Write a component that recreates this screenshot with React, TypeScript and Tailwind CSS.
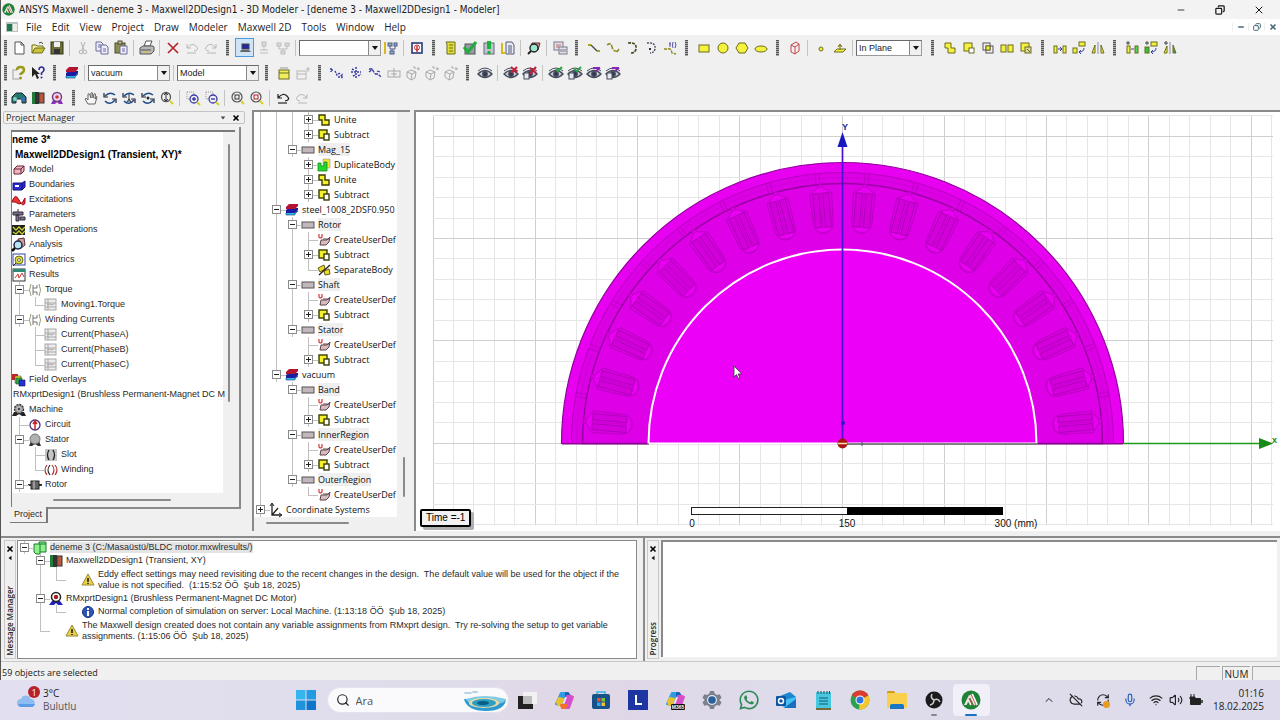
import React, { useState } from 'react';
import { Minus, Copy, X, Search, ChevronUp, CloudOff, RefreshCw, Mic, Wifi, Volume2 } from 'lucide-react';
import { FaWhatsapp } from 'react-icons/fa';

const Y = '#f4f23c';
const OL = '#6b6b1e';
const BL = '#3a3aa8';

const cube = <path d="M3 7l3-3h7v5l-3 3H3z M3 7h7v5 M10 7l3-3" />;

const eye = (
  <g fill="none" stroke="#454a5c" strokeWidth="1.4">
    <path d="M1 6Q8 0 15 6" strokeWidth="1" />
    <path d="M1 9Q8 2 15 9Q8 16 1 9z" fill="#c9cdd8" />
    <circle cx="8" cy="9" r="2.2" fill="#30364a" />
  </g>
);

const eyeBox = (
  <g>
    {eye}
    <rect x="2" y="8" width="5" height="6" fill="#e8e8f0" stroke="#454a5c" />
  </g>
);

const orbit = (
  <g fill="none" stroke="#1f4e8c" strokeWidth="1.6">
    <path d="M3 6Q8 1 13 5" />
    <path d="M3 11Q8 16 13 10" />
    <path d="M2 3v4h4M14 13V9h-4" strokeWidth="1.2" stroke="#223" />
  </g>
);

const icons: Record<string, React.ReactNode> = {
  new: <path d="M4 2h6l3 3v9H4z M10 2v3h3" fill="#fff" stroke="#555" />,
  open: <g stroke="#6b6b1e"><path d="M2 13V5h4l1 1h6v3" fill="#f7f3a0" /><path d="M2 13l3-5h10l-3 5z" fill="#c9c43a" /><path d="M9 3q3-2 4 1" fill="none" stroke="#444" /></g>,
  save: <g><rect x="2" y="2" width="12" height="12" fill="#6d6d35" stroke="#33331a" /><rect x="5" y="2" width="6" height="5" fill="#eee" /><rect x="5" y="9" width="6" height="5" fill="#333" /></g>,
  cut: <g stroke="#b4b4b4" fill="none"><path d="M6 2l3 8M10 2L7 10" /><circle cx="6" cy="12" r="1.8" /><circle cx="10" cy="12" r="1.8" /></g>,
  copy: <g fill="#eef" stroke="#6a6a98"><path d="M2 2h5l2 2v7H2z" /><path d="M7 5h5l2 2v7H7z" /><path d="M4 5h3M4 7h3M9 9h3M9 11h3" /></g>,
  paste: <g stroke="#4d4d2a"><rect x="2" y="3" width="10" height="10" fill="#8d8d55" /><rect x="5" y="1" width="4" height="3" fill="#bbb" /><path d="M7 6h7v8H7z" fill="#eef" stroke="#6a6a98" /><path d="M9 9h3M9 11h3" stroke="#6a6a98" /></g>,
  print: <g stroke="#555"><path d="M5 6l2-5h6l-2 5z" fill="#fff" /><path d="M1 8l3-2h10l1 1v4l-3 3H1z" fill="#b8b8b8" /><path d="M2 10h10" /><path d="M4 12h6" stroke="#d8c94a" /></g>,
  delete: <path d="M3 3l10 10M13 3L3 13" stroke="#b8232f" strokeWidth="1.7" />,
  undoOff: <g stroke="#b8b8b8" fill="none"><path d="M3 4v4h4M3 8q5-6 9-2t-2 5" /><path d="M3 13h9" /></g>,
  redoOff: <g stroke="#b8b8b8" fill="none"><path d="M13 4v4H9M13 8Q8 2 4 6t2 5" /><path d="M4 13h9" /></g>,
  undo: <g stroke="#222" fill="none" strokeWidth="1.2"><path d="M3 4v4h4M3 8q5-6 9-2t-2 5" /><path d="M3 13h9" /></g>,
  pc: <g><rect x="5" y="4" width="7" height="5" fill="#2525a8" stroke="#444" /><path d="M4 10h8l2 2H3z" fill="#666" /></g>,
  nodeOff: <g stroke="#bbb" fill="#ddd"><rect x="6" y="2" width="4" height="4" /><path d="M8 6v4M4 10h8M4 13h8" /></g>,
  treeOff: <g stroke="#bbb" fill="#ddd"><rect x="2" y="3" width="4" height="3" /><rect x="10" y="3" width="4" height="3" /><path d="M4 6v3h8V6M8 9v3" fill="none" /><rect x="6" y="11" width="4" height="3" /></g>,
  tree: <g stroke="#4a5a8a" fill="#9ab"><path d="M2 2v12" stroke="#d6b821" strokeWidth="2" /><rect x="5" y="3" width="4" height="3" /><rect x="11" y="3" width="3" height="3" /><path d="M7 6v3h5V6M9 9v3" fill="none" /><rect x="7" y="11" width="4" height="3" /></g>,
  chip: <g><rect x="3" y="3" width="10" height="10" fill="#fff" stroke="#27387a" strokeWidth="1.600" /><circle cx="8" cy="7.500" r="2.500" fill="none" stroke="#c22" /><path d="M8 12V6" stroke="#c22" strokeWidth="1.400" /></g>,
  note: <g stroke={OL}><path d="M3 2h9v12H4V4z" fill="#e4de3a" /><path d="M6 5h4M6 8h4M6 11h4" /></g>,
  check: <g><rect x="3" y="4" width="10" height="10" fill="#99a" stroke="#555" /><path d="M2 7l4 5 8-10" stroke="#1fae3c" strokeWidth="3" fill="none" /></g>,
  solve: <g><rect x="3" y="3" width="10" height="11" fill="#c4c4d0" stroke="#667" /><path d="M8 1v8" stroke="#17b53a" strokeWidth="4" /><circle cx="8" cy="12.500" r="1.700" fill="#17b53a" /></g>,
  report: <g><path d="M2 3v10h3" stroke="#d6b821" strokeWidth="2" fill="none" /><path d="M6 2h6l2 3v9H6z" fill="#e8eaf4" stroke="#555a78" /><path d="M8 6h4M8 8h4M8 10h4M8 12h4" stroke="#555a78" /></g>,
  lens: <g><path d="M6 3h8l-2 7H5z" fill="#d88" stroke="#633" /><circle cx="8" cy="8" r="4" fill="#9ee6d4" stroke="#222" strokeWidth="1.4" /><path d="M5 11l-3 3" stroke="#222" strokeWidth="2" /></g>,
  plots: <g stroke="#778" fill="#e2e2ec"><rect x="2" y="2" width="9" height="8" /><path d="M4 5h5M4 7h3" stroke="#c66" /><rect x="7" y="7" width="8" height="7" /><path d="M9 9v3M11 9v3M13 9v3" /></g>,
  line: <g fill="none" strokeWidth="1.400"><path d="M2 5h3M11 11h3" stroke="#a8a420" strokeWidth="2" /><path d="M5 5l6 6" stroke="#444" strokeWidth="1.200" /></g>,
  spline: <path d="M2 5q4-3 5 2t6 4M12 12l2-3" stroke="#8d8a20" fill="none" strokeWidth="1.500" strokeDasharray="4 1" />,
  arc: <path d="M4 3q9-1 8 6q-1 4-5 4" stroke="#444a20" fill="none" strokeWidth="1.600" strokeDasharray="3 1" />,
  arc2: <g><path d="M4 3q9-1 8 6q-1 4-5 4" stroke="#444a60" fill="none" strokeWidth="1.400" strokeDasharray="2 1" /><rect x="6" y="8" width="2" height="2" fill="#333" /></g>,
  eqn: <g fill="none"><path d="M2 9h4q3-1 4 4l4 1" stroke="#8d8a20" strokeWidth="1.400" strokeDasharray="3 1" /><path d="M8 2v5M7 4h2M11 2q-1 3 0 6M13 2q2 3 0 6" stroke="#55a" /></g>,
  rect: <rect x="3" y="5" width="10" height="7" fill={Y} stroke={OL} />,
  circle: <circle cx="8" cy="8" r="5" fill={Y} stroke={OL} />,
  poly: <path d="M5 3h6l3 5-3 5H5L2 8z" fill={Y} stroke={OL} />,
  ellipse: <ellipse cx="8" cy="9" rx="6" ry="3" fill={Y} stroke={OL} />,
  box3: <path d="M4 5l5-3 3 2v7l-4 3-4-2z M4 5l4 2v7 M8 7l4-3" fill="none" stroke="#c4444c" />,
  point: <circle cx="8" cy="9" r="2" fill={Y} stroke={OL} />,
  plane: <path d="M2 12l3-3h9l-3 3z M8 10V5M6 7l2-3 2 3" fill={Y} stroke={OL} />,
  unite: <path d="M3 3h6v5h4v5H6V8H3z" fill={Y} stroke={OL} />,
  subtract: <g stroke={OL}><rect x="3" y="3" width="8" height="8" fill={Y} /><rect x="8" y="8" width="5" height="5" fill="#fff" /></g>,
  intersect: <g stroke="#555" fill="none"><rect x="3" y="3" width="7" height="7" /><rect x="6" y="6" width="7" height="7" /><rect x="6" y="6" width="4" height="4" fill={Y} stroke={OL} /></g>,
  split: <g fill={Y} stroke={OL}><rect x="2" y="5" width="5" height="7" /><rect x="9" y="5" width="5" height="7" /></g>,
  imprint: <g stroke={OL} fill={Y}><rect x="3" y="3" width="8" height="8" /><rect x="7" y="7" width="6" height="6" fill="#d8d8a0" /><path d="M9 9l3 3" /></g>,
  move: <g fill={Y} stroke={OL}><rect x="2" y="6" width="3" height="7" /><rect x="11" y="6" width="3" height="7" /><path d="M6 9h4M8 7l2 2-2 2" stroke={BL} fill="none" /></g>,
  rotate: <g fill={Y} stroke={OL}><rect x="2" y="8" width="4" height="5" /><rect x="8" y="2" width="6" height="4" /><path d="M13 8q0 4-5 4M10 10l-2 2 2 2" stroke={BL} fill="none" /></g>,
  mirror: <g fill={Y} stroke={OL}><path d="M2 13l3-8v8z" /><path d="M14 13l-3-8v8z" /><path d="M8 2v12" stroke="#88a" /></g>,
  dupLine: <g fill={Y} stroke={OL}><rect x="3" y="6" width="3" height="7" /><rect x="11" y="6" width="3" height="7" fill="#4fd65a" /><path d="M7 9h3" stroke={BL} /><path d="M4 1v4M2 3h4" stroke="#444" /></g>,
  dupAxis: <g fill={Y} stroke={OL}><rect x="2" y="7" width="4" height="6" fill="#2fc63a" /><rect x="8" y="2" width="6" height="4" /><path d="M13 8q0 4-5 4M10 10l-2 2 2 2" stroke={BL} fill="none" /><path d="M4 1v4M2 3h4" stroke="#444" /></g>,
  dupMirror: <g fill={Y} stroke={OL}><path d="M2 13l3-7v7z" /><path d="M14 13l-3-8v8z" fill="#4fa65a" /><path d="M8 2v12" stroke="#88a" /><path d="M4 1v4M2 3h4" stroke="#444" /></g>,
  help: <g><path d="M6 5H2v9h6" stroke="#bbb" fill="none" strokeWidth="1.500" /><path d="M6 5q0-3 3.500-3T13 5q0 2-3.500 4v1" stroke="#9a9a1c" fill="none" strokeWidth="2.500" /><circle cx="9.500" cy="13" r="1.500" fill="#9a9a1c" /></g>,
  whatis: <g><path d="M2 2v10l3-3 2 5 2-1-2-4h3z" fill="#222" /><path d="M9 5q0-3 2.500-3T14 5q0 1-2.500 3v2" stroke="#2b2b9a" fill="none" strokeWidth="1.600" /><circle cx="11.500" cy="12.500" r="1" fill="#2b2b9a" /></g>,
  layers: <g><path d="M2 11l3-2h9l-3 3v1H2z" fill="#36b6e8" stroke="#147" strokeWidth=".6" /><path d="M2 8l3-2h9v2l-3 3H2z" fill="#1c1ca0" /><path d="M2 5l3-3h9v2l-3 3H2z" fill="#b31432" /></g>,
  sheet: <g><rect x="3" y="5" width="10" height="9" fill="#f0ee60" stroke="#6b6b1e" /><path d="M3 8h10" stroke="#6b6b1e" /><path d="M4 3h8" stroke="#999" /></g>,
  sheetOff: <g stroke="#b8b8b8" fill="none"><rect x="2" y="6" width="9" height="8" /><path d="M2 9h9M13 2v5M11 4h4" /></g>,
  pts1: <g fill="none" stroke={BL}><path d="M2 3v4M2 5h3M6 6l2 4 3-2M9 12h2l2-2v4" strokeDasharray="2 1" strokeWidth="1.500" /></g>,
  pts2: <path d="M8 2v11M3 7h10M4 4l2 1M10 11l3-2M5 11l2-1" fill="none" stroke={BL} strokeDasharray="2 1" strokeWidth="1.500" />,
  pts3: <path d="M2 4h3l3 5M2 7l4-3M8 9h3l3 3M10 6l3 1" fill="none" stroke={BL} strokeDasharray="3 1" strokeWidth="1.300" />,
  frameOff: <g fill="none" stroke="#aaa"><rect x="2" y="6" width="12" height="6" /><path d="M8 3v9M5 9h6" /></g>,
  gemOff: <g fill="none" stroke="#aaa"><path d="M2 7l4-2 5 2-1 6-4 2-4-3z M2 7l5 2 4-2M7 9l-1 6" /><path d="M9 3h2M13 2v3M15 4h-3M9 1v2" /></g>,
  eye,
  eyeX: <g>{eye}<path d="M8 2l6 5M14 2L8 8" stroke="#c01f38" strokeWidth="2" /></g>,
  eyeBoxX: <g>{eyeBox}<path d="M8 3l6 5M14 2L8 9" stroke="#c01f38" strokeWidth="2" /></g>,
  eyeG: <g>{eye}<path d="M8 4l2 2 4-4" stroke="#2da34a" fill="none" strokeWidth="2" /></g>,
  eyeBoxG: <g>{eyeBox}<path d="M7 4l3 2 4-4" stroke="#2da34a" fill="none" strokeWidth="2" /></g>,
  eyeP: <g>{eye}<path d="M7 3h7M10 6l4-3" stroke="#8428b8" fill="none" strokeWidth="2" /></g>,
  eyeBoxP: <g>{eyeBox}<path d="M7 3h7M10 6l4-3" stroke="#8428b8" fill="none" strokeWidth="2" /></g>,
  globe: <g><path d="M1 13V7l4-4h6l4 4v6h-4V9H5v4z" fill="#24786e" stroke="#223" /><circle cx="4" cy="9" r="2" fill="#7bd5c5" /><circle cx="12" cy="9" r="2" fill="#3a6bc0" /></g>,
  design: <g><rect x="2" y="2" width="3" height="12" fill="#247a3a" /><rect x="5" y="2" width="4" height="12" fill="#333" /><rect x="9" y="3" width="5" height="10" fill="#b8583a" stroke="#333" /></g>,
  motor: <g><path d="M4 10l-2 4h4l2-2 2 2h4l-2-4z" fill="#8e2dc0" /><circle cx="8" cy="7" r="4.500" fill="#e9d8ee" stroke="#7a3a88" strokeWidth="1.500" /><circle cx="8" cy="7" r="1.800" fill="#c33" /></g>,
  motor2: <g><path d="M4 10l-3 4h5l2-2 2 2h5l-3-4z" fill="#2222b8" /><circle cx="8" cy="6" r="4.500" fill="#fff" stroke="#222" strokeWidth="1.500" /><circle cx="8" cy="6" r="2.200" fill="#a81c1c" /></g>,
  hand: <path d="M5 14l-3-5q1-2 3 1V4q1-1 1.500 0L8 8l0-5q1-1 1.500 0l.5 5 1-4q1-1 1.500 0L12 9l1-2q1-1 1 0l-2 7z" fill="#f6f6f6" stroke="#555" strokeWidth=".9" />,
  orbit,
  orbitX: <g>{orbit}<path d="M8 4v8M6 12l2-3 2 3" stroke="#333" fill="none" /></g>,
  orbitDot: <g>{orbit}<circle cx="8" cy="8" r="1.500" fill="#222" /></g>,
  zoomDyn: <g fill="none"><circle cx="7" cy="7" r="4.500" stroke="#555" strokeWidth="1.300" /><path d="M7 4v6M5 5l2-2 2 2M5 9l2 2 2-2" stroke="#333" /><path d="M11 11l3 3" stroke="#d6d02a" strokeWidth="2" /></g>,
  zoomIn: <g fill="none"><path d="M2 2h7v3M2 2v7h3" stroke="#999" strokeDasharray="1 1" /><circle cx="9" cy="9" r="4" stroke={BL} strokeWidth="1.300" /><path d="M7 9h4M9 7v4" stroke={BL} strokeWidth="1.400" /><path d="M12 12l3 3" stroke="#d6d02a" strokeWidth="2" /></g>,
  zoomOut: <g fill="none"><path d="M2 2h7v3M2 2v7h3" stroke="#999" strokeDasharray="1 1" /><circle cx="9" cy="9" r="4" stroke={BL} strokeWidth="1.300" /><path d="M7 9h4" stroke={BL} strokeWidth="1.400" /><path d="M12 12l3 3" stroke="#d6d02a" strokeWidth="2" /></g>,
  fitAll: <g fill="none"><circle cx="7" cy="7" r="5" stroke="#555" strokeWidth="1.200" /><rect x="5" y="5" width="4" height="4" stroke="#333" /><path d="M11 11l3 3" stroke="#d6d02a" strokeWidth="2" /></g>,
  fitSel: <g fill="none"><circle cx="7" cy="7" r="5" stroke="#555" strokeWidth="1.200" /><rect x="5" y="5" width="4" height="4" stroke="#b23" /><path d="M11 11l3 3" stroke="#d6d02a" strokeWidth="2" /></g>,

  model: <g fill="#f0b4c0" stroke="#6b2433">{cube}</g>,
  boundaries: <g stroke="#15157a" fill="#2a2ad2"><path d="M2 6h9v7H2z M11 6l3-2v6l-3 3" /><path d="M4 9h4" stroke="#fff" strokeWidth="2" /></g>,
  excitations: <g><path d="M1 10Q4 0 8 8t6 3V6l-3 5-3 1-4-2z" fill="#e33" stroke="#9c1020" /></g>,
  parameters: <g stroke="#333" fill="#7a6a98"><path d="M2 5h10v3H2z M5 8h3v6H5z M9 10h5v3H9z M7 2v3" /></g>,
  mesh: <g><rect x="1" y="3" width="13" height="10" fill="#222" /><path d="M2 5l3 3 3-3 3 3 3-3M2 10l3 2 3-3 3 3 3-3" stroke="#c8d230" fill="none" strokeWidth="1.300" /></g>,
  analysis: <g><path d="M7 2l6-1 1 7-5 4z" fill="#d49aa4" stroke="#533" /><circle cx="7" cy="8" r="4" fill="#b8e4f2" stroke="#16264a" strokeWidth="1.500" /><path d="M4 11l-3 3" stroke="#111" strokeWidth="2.500" /></g>,
  optimetrics: <g><rect x="2" y="2" width="12" height="11" fill="#fff" stroke="#3344a8" /><circle cx="8" cy="8" r="4" fill="#e4e23a" stroke="#666a1a" /><circle cx="8" cy="8" r="1.500" fill="#fff" stroke="#666" /><path d="M2 14l3-3" stroke="#222" /></g>,
  results: <g><rect x="2" y="2" width="12" height="12" fill="#fff" stroke="#333" /><rect x="2" y="2" width="12" height="3" fill="#2d8a74" /><path d="M4 11l3-4 1 4 3-5 2 4" stroke="#c33" fill="none" /></g>,
  plot: <g fill="none" stroke="#9a9a7a"><path d="M4 2q-3 6 0 12M12 2q3 6 0 12" /><path d="M6 3v10M6 6h4v-3M6 10h4v3" stroke="#777" /></g>,
  trace: <g fill="#ececec" stroke="#a8a8a8"><rect x="2" y="2" width="11" height="11" /><path d="M2 6h11M2 10h11M4 8l2-1 2 1 3-1M5 2v11" /></g>,
  overlays: <g><path d="M1 2h6v6H1z" fill="#c8251d" /><path d="M4 4h6v7H4z" fill="#e8e12c" stroke="#444" strokeWidth=".6" /><path d="M5 6h6v6H5z" fill="#27b23c" stroke="#244" strokeWidth=".6" /><path d="M8 8h6v6H8z" fill="#2430d8" stroke="#114" strokeWidth=".6" /></g>,
  machine: <g><path d="M3 10l-2 4h4l3-2 3 2h4l-2-4z" fill="#222" /><circle cx="8" cy="7" r="4.500" fill="#999" stroke="#333" strokeWidth="1.300" strokeDasharray="2 1" /><circle cx="8" cy="7" r="2" fill="#444" stroke="#ddd" /></g>,
  circuit: <g fill="none"><circle cx="8" cy="8" r="5" stroke="#4b2f72" strokeWidth="1.300" /><path d="M8 12V5M6 7l2-3 2 3" stroke="#c22" strokeWidth="1.500" /></g>,
  stator: <g><path d="M4 9l-2 5h3l3-2 3 2h3l-2-5z" fill="#333" /><circle cx="8" cy="7" r="5" fill="#b0b0b0" stroke="#777" /></g>,
  slot: <g><rect x="2" y="2" width="12" height="12" fill="#c4c4c4" /><path d="M6 3q-3 5 0 10M10 3q3 5 0 10" stroke="#222" fill="none" strokeWidth="1.300" /></g>,
  winding: <g fill="none" strokeWidth="1.200"><path d="M4 3q-4 5 0 10M12 3q4 5 0 10" stroke="#a33" /><path d="M7 3q-4 5 0 10" stroke="#333" /><path d="M9 3q4 5 0 10" stroke="#b33" /></g>,
  rotor: <g><path d="M1 8h14" stroke="#333" strokeWidth="2" /><rect x="4" y="4" width="8" height="8" fill="#666" stroke="#222" /><path d="M7 4v8" stroke="#ccc" /></g>,
  unite2: <path d="M3 3h6v5h4v5H6V8H3z" fill="#f4f02c" stroke="#3c3c00" strokeWidth="1.400" />,
  subtract2: <g stroke="#3c3c00" strokeWidth="1.400"><rect x="3" y="3" width="8" height="8" fill="#f4f02c" /><rect x="8" y="7" width="5" height="6" fill="#fff" /></g>,
  object: <rect x="2" y="5" width="12" height="6" fill="#c0b8bc" stroke="#5a5055" />,
  duplicate: <g><path d="M7 2h7v9H7z" fill="#f4e62c" stroke="#998" strokeWidth=".6" /><path d="M2 6h3v3h3V5h3v9H2z" fill="#22d82c" stroke="#1a8a22" strokeWidth=".8" /></g>,
  udp: <g><path d="M4 13l1-5h6l3-3-1 5-3 3z" fill="#d9bcc0" stroke="#5c4448" /><path d="M7 7h6" stroke="#5c4448" /><path d="M3 2v3q1 2 3 0V2" stroke="#d33" fill="none" strokeWidth="1.200" /></g>,
  separate: <g><path d="M2 6l6-3 1 4-5 3z M8 9l5-2 1 5-5 1z" fill="#ecd92c" stroke="#665c10" /><path d="M3 13L14 3" stroke="#222" strokeWidth="1.300" /></g>,
  coords: <g fill="none" stroke="#222" strokeWidth="1.300"><path d="M4 2v11h9M4 13l6-7" /><path d="M2 4l2-3 2 3M11 11l3 2-3 2" strokeWidth="1" /></g>,
  project: <g fill="#8df08a" stroke="#1a7a2c"><path d="M7 2h7v10H7z" /><path d="M2 4h6v10H4l-2-2z" /><path d="M8 4h6" /></g>,
  warning: <g><path d="M8 2l6 11H2z" fill="#e8cf4a" stroke="#9a8a30" strokeLinejoin="round" /><path d="M8 6v4M8 11v1" stroke="#222" strokeWidth="1.600" /></g>,
  info: <g><circle cx="8" cy="8" r="5.500" fill="#2d55b8" stroke="#183880" /><path d="M8 7v5M8 4v2" stroke="#fff" strokeWidth="2" /></g>,
};

const Icon: React.FC<{ name: string }> = ({ name }) => (
  <svg viewBox="0 0 16 16" className="w-4 h-4 shrink-0" fill="none" aria-hidden="true">
    {icons[name]}
  </svg>
);

const Logo: React.FC<{ className: string }> = ({ className }) => (
  <svg viewBox="0 0 20 20" className={className} fill="none" aria-hidden="true">
    <circle cx="10" cy="10" r="9.500" fill="#1d8236" />
    <path d="M3 15L8 5l1.500 2.500L5.500 15z" fill="#f3e4e4" />
    <path d="M7 9l3 6M9 5l5 10" stroke="#f6dede" strokeWidth="2" />
    <path d="M8 8l3.500 7" stroke="#c0424a" strokeWidth="1" />
    <path d="M11 4l5 11" stroke="#fff" strokeWidth="2" />
    <path d="M10 4l5 11" stroke="#c0424a" strokeWidth=".8" />
  </svg>
);

const Combo: React.FC<{ label: string; value: string; className: string }> = ({ label, value, className }) => (
  <div className={`relative h-4 shrink-0 border border-[#9a9a9a] border-t-[#6a6a6a] border-l-[#6a6a6a] bg-white ${className}`}>
    <select aria-label={label} className="block h-full w-full appearance-none bg-transparent pl-0.5 text-[9px] leading-[14px] text-[#222] outline-none">
      <option>{value}</option>
    </select>
    <span className="pointer-events-none absolute inset-y-0 right-0 flex w-3 items-center justify-center border-l border-[#8a8a8a] bg-[#f0f0f0]">
      <svg viewBox="0 0 8 8" className="h-2 w-2"><path d="M1 2h6L4 6z" fill="#111" /></svg>
    </span>
  </div>
);

const Grip = () => (
  <div className="flex w-[15px] shrink-0 justify-center">
    <div className="h-4 w-[3px] bg-[repeating-linear-gradient(#555_0_1px,#aaa_1px_2px)]" />
  </div>
);

// "|" is a separator, "#" a grip, "=name" a combo box
const toolbars = [
  'new open save | cut copy paste | print | delete undoOff redoOff # pc nodeOff treeOff | =Variation tree | chip # note check solve report | lens | plots # line spline arc arc2 eqn # rect circle poly ellipse # box3 | point plane | =Plane # unite subtract intersect split imprint # move rotate mirror # dupLine dupAxis dupMirror',
  'help whatis # layers | =Material | =Kind # sheet sheetOff # pts1 pts2 pts3 frameOff gemOff gemOff gemOff # eye | eyeX eyeBoxX | eyeG eyeBoxG eyeP eyeBoxP',
  'globe design motor # hand orbit orbitX orbitDot zoomDyn | zoomIn zoomOut | fitAll fitSel | undo redoOff',
];

const combos: Record<string, React.ReactNode> = {
  Variation: <Combo label="Variation" value="" className="w-[82px]" />,
  Plane: <Combo label="Drawing plane" value="In Plane" className="w-[66px] mr-[3px]" />,
  Material: <Combo label="Material" value="vacuum" className="w-[82px]" />,
  Kind: <Combo label="Object kind" value="Model" className="w-[82px]" />,
};

const Toolbar: React.FC<{ items: string }> = ({ items }) => (
  <div className="flex h-[25px] items-center">
    <div className="ml-[3px] mr-0.5 h-4 w-[3px] shrink-0 bg-[repeating-linear-gradient(#555_0_1px,#aaa_1px_2px)]" />
    {items.split(' ').map((item, i) => {
      if (item === '|') return <div key={i} className="mx-[3px] h-4 w-px shrink-0 bg-[#c4c4c4]" />;
      if (item === '#') return <Grip key={i} />;
      if (item[0] === '=') return <React.Fragment key={i}>{combos[item.slice(1)]}</React.Fragment>;
      return (
        <button
          key={i}
          type="button"
          aria-label={item}
          className={`flex h-[19px] w-[19px] shrink-0 items-center justify-center ${item === 'pc' ? 'border border-[#4a9be0] bg-[#cfe4f7]' : ''}`}
        >
          <Icon name={item} />
        </button>
      );
    })}
  </div>
);

// guide characters: "|" line, "T" branch, "L" last branch, "-" open node, "+" closed node, "." empty
type Row = { g: string; icon?: string; text: string; mark?: boolean };

const Guide: React.FC<{ kind: string }> = ({ kind }) => {
  const node = kind === '-' || kind === '+';
  return (
    <span className="relative flex w-4 shrink-0 items-center self-stretch">
      {kind !== '.' && <span className={`absolute left-[6px] top-0 w-px bg-[#c0c0c0] ${kind === 'L' ? 'h-1/2' : 'h-full'}`} />}
      {kind !== '.' && kind !== '|' && <span className="absolute left-[6px] right-0 top-1/2 h-px bg-[#c0c0c0]" />}
      {node && (
        <svg viewBox="0 0 9 9" className="relative ml-0.5 h-[9px] w-[9px]" aria-hidden="true">
          <rect x=".5" y=".5" width="8" height="8" fill="#fff" stroke="#8a8a8a" />
          <path d={kind === '+' ? 'M2 4.500h5M4.500 2v5' : 'M2 4.500h5'} stroke="#222" />
        </svg>
      )}
    </span>
  );
};

const TreeRow: React.FC<{ row: Row }> = ({ row }) => (
  <li className="flex h-[15px] items-center whitespace-nowrap">
    {row.g.split('').map((k, i) => <Guide key={i} kind={k} />)}
    {row.icon && <span className="-ml-0.5 mr-0.5"><Icon name={row.icon} /></span>}
    <span className={row.mark ? 'bg-[#efefef]' : ''}>{row.text}</span>
  </li>
);

const projectRows: Row[] = [
  { g: '', icon: 'model', text: 'Model' },
  { g: '', icon: 'boundaries', text: 'Boundaries' },
  { g: '', icon: 'excitations', text: 'Excitations' },
  { g: '', icon: 'parameters', text: 'Parameters' },
  { g: '', icon: 'mesh', text: 'Mesh Operations' },
  { g: '', icon: 'analysis', text: 'Analysis' },
  { g: '', icon: 'optimetrics', text: 'Optimetrics' },
  { g: '', icon: 'results', text: 'Results' },
  { g: '-', icon: 'plot', text: 'Torque' },
  { g: '|L', icon: 'trace', text: 'Moving1.Torque' },
  { g: '-', icon: 'plot', text: 'Winding Currents' },
  { g: '.T', icon: 'trace', text: 'Current(PhaseA)' },
  { g: '.T', icon: 'trace', text: 'Current(PhaseB)' },
  { g: '.L', icon: 'trace', text: 'Current(PhaseC)' },
  { g: '', icon: 'overlays', text: 'Field Overlays' },
  { g: '', text: 'RMxprtDesign1 (Brushless Permanent-Magnet DC M' },
  { g: '', icon: 'machine', text: 'Machine' },
  { g: 'T', icon: 'circuit', text: 'Circuit' },
  { g: '-', icon: 'stator', text: 'Stator' },
  { g: '|T', icon: 'slot', text: 'Slot' },
  { g: '|L', icon: 'winding', text: 'Winding' },
  { g: '-', icon: 'rotor', text: 'Rotor' },
];

const modelRows: Row[] = [
  { g: '|||+', icon: 'unite2', text: 'Unite' },
  { g: '|||+', icon: 'subtract2', text: 'Subtract' },
  { g: '||-', icon: 'object', text: 'Mag_15', mark: true },
  { g: '||.+', icon: 'duplicate', text: 'DuplicateBody' },
  { g: '||.+', icon: 'unite2', text: 'Unite' },
  { g: '||.+', icon: 'subtract2', text: 'Subtract' },
  { g: '|-', icon: 'layers', text: 'steel_1008_2DSF0.950' },
  { g: '||-', icon: 'object', text: 'Rotor', mark: true },
  { g: '|||T', icon: 'udp', text: 'CreateUserDef' },
  { g: '|||+', icon: 'subtract2', text: 'Subtract' },
  { g: '|||L', icon: 'separate', text: 'SeparateBody' },
  { g: '||-', icon: 'object', text: 'Shaft', mark: true },
  { g: '|||T', icon: 'udp', text: 'CreateUserDef' },
  { g: '|||+', icon: 'subtract2', text: 'Subtract' },
  { g: '||-', icon: 'object', text: 'Stator', mark: true },
  { g: '||.T', icon: 'udp', text: 'CreateUserDef' },
  { g: '||.+', icon: 'subtract2', text: 'Subtract' },
  { g: '|-', icon: 'layers', text: 'vacuum' },
  { g: '|.-', icon: 'object', text: 'Band', mark: true },
  { g: '|.|T', icon: 'udp', text: 'CreateUserDef' },
  { g: '|.|+', icon: 'subtract2', text: 'Subtract' },
  { g: '|.-', icon: 'object', text: 'InnerRegion', mark: true },
  { g: '|.|T', icon: 'udp', text: 'CreateUserDef' },
  { g: '|.|+', icon: 'subtract2', text: 'Subtract' },
  { g: '|.-', icon: 'object', text: 'OuterRegion', mark: true },
  { g: '|..L', icon: 'udp', text: 'CreateUserDef' },
  { g: '+', icon: 'coords', text: 'Coordinate Systems' },
];

const ProjectManager = () => (
  <section className="flex w-[242px] shrink-0 flex-col font-['Liberation_Sans',sans-serif] text-[9px] text-[#2a2a2a]">
    <header className="mt-px flex h-[13px] shrink-0 items-center rounded-xs border border-[#c4c4c4] px-0.5 font-['Open_Sans',sans-serif]">
      <h2 className="flex-1">Project Manager</h2>
      <button type="button" aria-label="Menu" className="mr-1.5"><svg viewBox="0 0 8 8" className="h-1.5 w-1.5"><path d="M1 2h6L4 6z" fill="#444" /></svg></button>
      <button type="button" aria-label="Close" className="mr-0.5"><X className="h-2 w-2 text-black" strokeWidth={5} /></button>
    </header>
    <div className="ml-2 mr-1 mt-[3px] flex min-h-0 flex-1 flex-col border-r-2 border-[#8a8a8a]">
      <div className="mr-1 mt-[3px] flex min-h-0 flex-1 flex-col border-l border-t-2 border-[#7a7a7a]">
        <div className="flex min-h-0 flex-1">
          <div className="min-h-0 w-[211px] bg-white">
            <h3 className="flex h-[15px] items-center text-[10px] font-bold text-black">neme 3*</h3>
            <h3 className="flex h-[15px] items-center whitespace-nowrap pl-[3px] text-[10px] font-bold text-black">Maxwell2DDesign1 (Transient, XY)*</h3>
            <ul className="pl-px">
              {projectRows.map((row, i) => <TreeRow key={i} row={row} />)}
            </ul>
          </div>
          <div className="ml-[5px] mt-3 h-[258px] w-0.5 rounded bg-[#8a8a8a]" />
        </div>
        <div className="ml-[41px] my-[6px] h-0.5 w-[118px] shrink-0 rounded bg-[#8a8a8a]" />
      </div>
    </div>
    <div className="mb-2 ml-[7px] mr-1 flex h-4 shrink-0">
      <button type="button" className="w-[38px] border-b border-r-2 border-[#7a7a7a]">Project</button>
      <div className="flex-1 border-t-2 border-[#8a8a8a]" />
    </div>
  </section>
);

const ModelTree = () => (
  <section className="flex w-[158px] shrink-0 flex-col border-l-2 border-t-2 border-[#8a8a8a] font-['Open_Sans',sans-serif] text-[9px] text-[#111]">
    <div className="flex">
      <ul className="w-[143px] bg-white">
        {modelRows.map((row, i) => <TreeRow key={i} row={row} />)}
      </ul>
      <div className="mb-5 ml-1.5 h-10 w-0.5 self-end rounded bg-[#8a8a8a]" />
    </div>
    <div className="ml-3 mt-[5px] h-0.5 w-[83px] rounded bg-[#8a8a8a]" />
  </section>
);

const CX = 842.5;
const CY = 443.5;
const STEP = 20.45;
const half = (r: number) => `M${CX - r} ${CY}A${r} ${r} 0 0 1 ${CX + r} ${CY}`;

const Slot: React.FC<{ angle: number }> = ({ angle }) => (
  <g transform={`translate(${CX} ${CY}) rotate(${-angle})`} stroke="#b400be" strokeWidth=".8">
    <path d="M260 -2H257L251 -11L220 -10Q211 -8 211 0T220 10L251 11L257 2H260" fill="#d900e1" />
    <path d="M257 -2L251 -10V10L257 2z M217 -9Q212 -6 212 0T217 9z" fill="#ea00f2" stroke="#c400cc" />
    <rect x="217" y="-8" width="34" height="6" fill="#d400dc" stroke="#a800b2" />
    <rect x="217" y="2" width="34" height="6" fill="#d400dc" stroke="#a800b2" />
    <path d="M217 0H253" stroke="#c000ca" />
  </g>
);

const Viewport = () => (
  <section className="relative min-w-0 flex-1 border-l-2 border-t-2 border-[#8a8a8a] bg-white">
    <svg viewBox="416 112 864 419" preserveAspectRatio="xMinYMin slice" className="absolute inset-0 h-full w-full" role="img" aria-label="Motor cross section">
      <g strokeWidth="1">
        {Array.from({ length: 42 }, (_, i) => {
          const x = Math.round(CX + (i - 20) * STEP) - 0.5;
          return <path key={i} d={`M${x} 116V525.500`} stroke={i % 5 === 0 ? '#cfcfcf' : '#e6e6e6'} />;
        })}
        {Array.from({ length: 21 }, (_, i) => {
          const y = Math.round(CY + (i - 16) * STEP) - 0.5;
          return <path key={i} d={`M433 ${y}H1273`} stroke={i % 5 === 1 ? '#cfcfcf' : '#e6e6e6'} />;
        })}
      </g>
      <path d={`${half(281)}z`} fill="#e800f0" stroke="#90009a" strokeWidth="1.200" />
      <path d={`${half(271)}z`} fill="#dc00e4" stroke="#b400be" />
      <path d={half(266)} fill="none" stroke="#d000d8" />
      <path d={`${half(260)}z`} fill="#de00e6" stroke="#9a00a4" strokeWidth="1.500" />
      {Array.from({ length: 16 }, (_, i) => (
        <path key={i} d="M261 -2H271M261 2H271" stroke="#b800c2" strokeWidth=".8" transform={`translate(${CX} ${CY}) rotate(${-(i + 1) * 10.6})`} />
      ))}
      {Array.from({ length: 18 }, (_, i) => <Slot key={i} angle={5 + i * 10} />)}
      <path d={`${half(194)}z`} fill="#ec00f8" stroke="#fff" strokeWidth="2" />
      <path d="M842 444H1037" stroke="#5c5c5c" strokeWidth="1.500" />
      <path d="M562 444H649M1037 444H1123" stroke="#7a0a80" />
      <path d="M862 441v5" stroke="#4a4a6a" />
      <path d="M1123 443.500H1260" stroke="#1e9a1e" strokeWidth="1.500" />
      <path d="M1259 438l14 5.500-14 5.500z" fill="#178a17" />
      <path d="M842.500 144V441" stroke="#4a10d8" strokeWidth="1.700" />
      <path d="M842.500 132l5 15h-10z" fill="#1717c0" />
      <circle cx="843" cy="423" r="2" fill="#2a18c8" />
      <circle cx="842.500" cy="443.500" r="5" fill="#a81414" />
      <path d="M838 443.500h9" stroke="#f8e0b0" strokeWidth="1.500" />
      <g fontFamily="Liberation Sans, sans-serif">
        <text x="842" y="130" fontSize="9" fontWeight="700" fill="#1a1a9a">Y</text>
        <text x="1272" y="443" fontSize="9" fontWeight="700" fill="#178a17">x</text>
        <rect x="691.500" y="507.500" width="156" height="7" fill="#fff" stroke="#222" />
        <rect x="847" y="507" width="156" height="8" fill="#000" />
        <g fontSize="10" fill="#111" textAnchor="middle">
          <text x="692" y="527">0</text>
          <text x="847" y="527">150</text>
          <text x="1016" y="527">300 (mm)</text>
        </g>
      </g>
      <path d="M734 366v11l2.500-2.500 1.800 4 1.600-.8-1.800-3.800h3.600z" fill="#fff" stroke="#333" strokeWidth=".8" />
    </svg>
    <div className="absolute bottom-1 left-1 rounded-xs border-2 border-black bg-[#f2f2f2] px-1 font-['Liberation_Sans',sans-serif] text-[10px] leading-[14px] text-black shadow-[3px_3px_0_#b0b0b0]">
      Time =-1
    </div>
  </section>
);

const messages: { g: string; icon: string; lines: string[]; mark?: boolean }[] = [
  { g: '-', icon: 'project', lines: ['deneme 3 (C:/Masaüstü/BLDC motor.mxwlresults/)'], mark: true },
  { g: '.-', icon: 'design', lines: ['Maxwell2DDesign1 (Transient, XY)'] },
  {
    g: '.|L.',
    icon: 'warning',
    lines: [
      'Eddy effect settings may need revisiting due to the recent changes in the design.\u00a0 The default value will be used for the object if the',
      'value is not specified.\u00a0 (1:15:52 ÖÖ\u00a0 Şub 18, 2025)',
    ],
  },
  { g: '.-', icon: 'motor2', lines: ['RMxprtDesign1 (Brushless Permanent-Magnet DC Motor)'] },
  { g: '.|L.', icon: 'info', lines: ['Normal completion of simulation on server: Local Machine. (1:13:18 ÖÖ\u00a0 Şub 18, 2025)'] },
  {
    g: '.L.',
    icon: 'warning',
    lines: [
      'The Maxwell design created does not contain any variable assignments from RMxprt design.\u00a0 Try re-solving the setup to get variable',
      'assignments. (1:15:06 ÖÖ\u00a0 Şub 18, 2025)',
    ],
  },
];

const DockHandle: React.FC<{ title: string }> = ({ title }) => (
  <header className="my-0.5 flex w-3 shrink-0 flex-col items-center border border-[#c8c8c8] pb-0.5 pt-1">
    <button type="button" aria-label={`Close ${title}`}><X className="block h-2 w-2 text-black" strokeWidth={5} /></button>
    <button type="button" aria-label={`Hide ${title}`} className="mt-0.5"><svg viewBox="0 0 8 8" className="h-1.5 w-1.5"><path d="M6 1v6L2 4z" fill="#111" /></svg></button>
    <h2 className="mt-auto rotate-180 whitespace-nowrap text-[8px] font-semibold leading-[10px] text-[#222] [writing-mode:vertical-rl]">{title}</h2>
  </header>
);

const BottomDock = () => (
  <div className="flex h-[126px] shrink-0 border-b border-t-2 border-b-[#c8c8c8] border-t-[#8a8a8a] font-['Open_Sans',sans-serif]">
    <section className="flex w-[calc(50%+4px)] border-r-2 border-[#8a8a8a] pl-[3px]">
      <DockHandle title="Message Manager" />
      <ul className="my-0.5 ml-px mr-1.5 min-w-0 flex-1 overflow-hidden border border-[#8a8a8a] bg-white font-['Liberation_Sans',sans-serif] text-[9px] leading-[11px] text-[#2a2a2a]">
        {messages.map((m) => (
          <li key={m.lines[0]} className={`flex items-center whitespace-nowrap ${m.lines.length > 1 ? 'h-[25px]' : 'h-[13px]'}`}>
            {m.g.split('').map((k, i) => <Guide key={i} kind={k} />)}
            <span className="-ml-0.5 mr-0.5"><Icon name={m.icon} /></span>
            <p className={m.mark ? 'bg-[#e4e4e4]' : ''}>
              {m.lines.map((l) => <span key={l} className="block">{l}</span>)}
            </p>
          </li>
        ))}
      </ul>
    </section>
    <section className="flex min-w-0 flex-1 pl-0.5">
      <DockHandle title="Progress" />
      <div className="mb-1 ml-0.5 mr-[3px] mt-0.5 flex-1 border-l-2 border-t-2 border-[#8a8a8a] bg-white" />
    </section>
  </div>
);

const copilot = (
  <g strokeLinejoin="round" strokeWidth="2">
    <path d="M7 3h6l-4 12H5l-3-1z" fill="#2f9be0" stroke="#2f9be0" />
    <path d="M3 12l2-4 4 1-2 6H4z" fill="#e8c22c" stroke="#e8c22c" />
    <path d="M12 3h2l2 3h-4z" fill="#1c5fc0" stroke="#1c5fc0" />
    <path d="M13 6h4l2 1-4 11H9z" fill="#d650c8" stroke="#d650c8" />
    <path d="M7 15h6l-2 3H8z" fill="#f0702c" stroke="#f0702c" />
    <path d="M11 7l2 .3-2.500 6.500-2-.3z" fill="#efe4f2" />
  </g>
);

const taskApps: { name: string; art: React.ReactNode; active?: boolean }[] = [
  { name: 'Task view', art: <g><rect x="6" y="2" width="14" height="12" fill="#f2f2f2" /><path d="M1 6h5v8h10v5H1z" fill="#222" /><rect x="6" y="6" width="9" height="8" fill="#bdbdbd" /></g> },
  { name: 'Copilot', art: copilot },
  { name: 'Store', art: <g><path d="M6 5V2h8v3" stroke="#39b2e6" fill="none" strokeWidth="1.500" /><rect x="1" y="4" width="18" height="15" rx="2" fill="#17528a" /><path d="M6 8h3.500v3.500H6z" fill="#e8512c" /><path d="M10.500 8H14v3.500h-3.500z" fill="#7cc03c" /><path d="M6 12.500h3.500V16H6z" fill="#2ea8e8" /><path d="M10.500 12.500H14V16h-3.500z" fill="#f5bd2c" /></g> },
  { name: 'Lenovo Vantage', art: <g><rect width="20" height="20" fill="#1d36a4" /><path d="M8 5v9h6" stroke="#fff" strokeWidth="2" fill="none" /></g> },
  { name: 'Microsoft 365 Copilot', art: <g>{copilot}<rect x="6" y="14" width="14" height="6" rx="1" fill="#111" /><text x="13" y="19" fontSize="5" fontWeight="700" textAnchor="middle" fill="#fff" fontFamily="Liberation Sans, sans-serif">M365</text></g> },
  { name: 'Settings', art: <g><path d="M8 1h4l.6 2.600 2.400 1.400 2.600-.8 2 3.500-2 1.800v1l2 1.800-2 3.500-2.600-.8-2.400 1.400L12 19H8l-.6-2.600L5 15l-2.600.8-2-3.500 2-1.800v-1l-2-1.800 2-3.500L5 5l2.400-1.400z" fill="#7a808c" /><circle cx="10" cy="10" r="5" fill="#e4e8f0" /><circle cx="10" cy="10" r="3.800" fill="#2a5f9a" /></g> },
  { name: 'WhatsApp', art: null },
  { name: 'Outlook', art: <g><path d="M4 6l10-4 6 5v11H8z" fill="#1b86d2" /><path d="M8 10l12-3v11H8z" fill="#45c0f2" /><path d="M8 18l12-9v9z" fill="#1a6fc0" /><rect y="6" width="10" height="10" rx="1" fill="#0f56a0" /><circle cx="5" cy="11" r="2.500" stroke="#fff" strokeWidth="1.500" fill="none" /></g> },
  { name: 'Notepad', art: <g><rect x="3" y="2" width="15" height="17" rx="1" fill="#48c8de" /><path d="M5 1v3M8 1v3M11 1v3M14 1v3M16.500 1v3" stroke="#256" strokeWidth="1" /><path d="M6 8h9M6 11h9M6 14h9" stroke="#145a78" strokeWidth="1.200" /><path d="M3 18h15v2H3z" fill="#7a6a3a" /></g> },
  { name: 'Chrome', art: <g><circle cx="10" cy="10" r="9.500" fill="#2da14c" /><path d="M10 10L1.800 5.200A9.500 9.500 0 0 1 18.300 5.500z" fill="#dc3b30" /><path d="M10 10l8.300-4.500A9.500 9.500 0 0 1 9 19.500z" fill="#f6c62e" /><circle cx="10" cy="10" r="4.500" fill="#fff" /><circle cx="10" cy="10" r="3.500" fill="#2f75e0" /></g> },
  { name: 'File Explorer', art: <g><path d="M0 2q0-1 1-1h6l2 3H0z" fill="#d99a1c" /><rect y="3" width="20" height="15" rx="1" fill="#f8d04c" /><path d="M3 19v-3q0-2 2-2h10q2 0 2 2v3z" fill="#1877c4" /></g> },
  { name: 'OBS Studio', art: <g><circle cx="10" cy="10" r="8.500" fill="#1b1b1e" /><path d="M10 10Q6 8 8 4M10 10q4-2 6 2M10 10q0 4-4 5" stroke="#ccc" strokeWidth="1.500" fill="none" /></g> },
  { name: 'ANSYS Maxwell', art: null, active: true },
];

const TaskIcon: React.FC<{ name: string; art: React.ReactNode }> = ({ name, art }) => {
  if (name === 'WhatsApp') return <FaWhatsapp className="h-[22px] w-[22px] text-[#2c8a54]" />;
  if (name === 'ANSYS Maxwell') return <Logo className="h-5 w-5" />;
  return <svg viewBox="0 0 20 20" className="h-5 w-5" aria-hidden="true">{art}</svg>;
};

const Taskbar = () => {
  const [query, setQuery] = useState('');
  return (
    <footer className="flex h-10 shrink-0 items-center bg-[linear-gradient(90deg,#e2e0f0,#dfdcea_35%,#e0d6e6_45%,#dedbea_60%,#dedcec)] font-['Open_Sans',sans-serif] text-[10px] leading-[13px] text-[#222]">
      <div className="flex flex-1 items-center pl-4">
        <div className="relative mr-[7px]">
          <svg viewBox="0 0 20 20" className="h-5 w-5" aria-hidden="true"><path d="M5 17a4 4 0 0 1 0-8 5 5 0 0 1 9.500 0A4 4 0 0 1 15 17z" fill="#8fbdf2" /><path d="M5 17h10q3 0 4-3H2q1 3 3 3z" fill="#5c9be6" /></svg>
          <span className="absolute -right-1 -top-1 flex h-3 w-3 items-center justify-center rounded-full bg-[#b8202c] text-[9px] leading-none text-white">1</span>
        </div>
        <div>
          <p>3°C</p>
          <p className="text-[#555]">Bulutlu</p>
        </div>
      </div>
      <nav className="mr-1 flex items-center">
        <button type="button" aria-label="Start" className="mr-0.5 flex w-[38px] justify-center">
          <svg viewBox="0 0 20 20" className="h-5 w-5" aria-hidden="true"><path d="M0 0h9.500v9.500H0z" fill="#35b4ee" /><path d="M10.500 0H20v9.500h-9.500z" fill="#239be2" /><path d="M0 10.500h9.500V20H0z" fill="#1f92dc" /><path d="M10.500 10.500H20V20h-9.500z" fill="#0f74cc" /></svg>
        </button>
        <label className="flex h-[26px] w-[182px] items-center rounded-full border border-[#e4e2ec] bg-[#faf9fc] pl-2">
          <Search className="h-3.5 w-3.5 text-[#222]" strokeWidth={2} />
          <input value={query} onChange={(e) => setQuery(e.target.value)} placeholder="Ara" aria-label="Ara" className="ml-1.5 w-0 flex-1 bg-transparent text-[11px] outline-none placeholder:text-[#555]" />
          <svg viewBox="0 0 46 24" className="h-6 w-[46px]" aria-hidden="true">
            <path d="M2 11h42q-1 12-20 12T2 11z" fill="#2a9ad0" />
            <path d="M4 11q18-6 40 0-2 6-20 6T4 11z" fill="#7fcbe6" />
            <ellipse cx="22" cy="15" rx="15" ry="5" fill="#ead9a8" />
            <ellipse cx="22" cy="15" rx="12" ry="4" fill="#2ca0c4" />
            <ellipse cx="21" cy="15" rx="6" ry="2" fill="#0d5c86" />
            <path d="M3 5h6M11 4h4" stroke="#b8d4e4" strokeWidth="2" strokeLinecap="round" />
          </svg>
        </label>
        {taskApps.map((app) => (
          <button
            key={app.name}
            type="button"
            aria-label={app.name}
            className={`relative flex h-8 w-[37px] items-center justify-center ${app.active ? 'rounded bg-[#f1eff8]' : ''}`}
          >
            <TaskIcon name={app.name} art={app.art} />
            {app.active && <span className="absolute bottom-0 h-0.5 w-3 rounded bg-[#1a74c4]" />}
            {app.name === 'OBS Studio' && <span className="absolute bottom-0 h-0.5 w-1.5 rounded bg-[#888]" />}
          </button>
        ))}
      </nav>
      <div className="flex flex-1 items-center justify-end pr-4 text-[#222]">
        <ChevronUp className="mr-3.5 h-3 w-3" />
        <CloudOff className="mr-[13px] h-3.5 w-3.5" />
        <span className="relative mr-[13px]">
          <RefreshCw className="h-3.5 w-3.5" />
          <span className="absolute -bottom-px right-0 h-[7px] w-[7px] rounded-full bg-[#e89a24]" />
        </span>
        <Mic className="mr-3 h-3.5 w-3.5 text-[#2a62b8]" />
        <Wifi className="mr-1.5 h-3.5 w-3.5" />
        <Volume2 className="mr-1.5 h-3.5 w-3.5" />
        <svg viewBox="0 0 14 14" className="h-3.5 w-3.5" aria-hidden="true"><rect x="1" y="5" width="11" height="7" rx="1" fill="#222" /><path d="M13 7v3" stroke="#222" strokeWidth="1.500" /><path d="M2 1v3M5 1v3M1 4h5v2H1z" stroke="#222" fill="#222" /></svg>
        <div className="ml-2.5 text-right">
          <p>01:16</p>
          <p>18.02.2025</p>
        </div>
      </div>
    </footer>
  );
};

const menus = ['File', 'Edit', 'View', 'Project', 'Draw', 'Modeler', 'Maxwell 2D', 'Tools', 'Window', 'Help'];

export default function App() {
  return (
    <div className="flex h-screen flex-col overflow-hidden bg-[#f0f0f0]">
      <div className="flex min-h-0 flex-1 flex-col border-l border-[#555]">
        <header className="flex h-[19px] shrink-0 items-center bg-[#f3f3f3] pl-px pr-0.5 font-['DejaVu_Sans_Condensed','DejaVu_Sans',sans-serif] text-[10px] text-[#1a1a1a]">
          <Logo className="mr-1 h-[13px] w-[13px]" />
          <h1 className="flex-1 whitespace-nowrap">ANSYS Maxwell - deneme 3 - Maxwell2DDesign1 - 3D Modeler - [deneme 3 - Maxwell2DDesign1 - Modeler]</h1>
          <button type="button" aria-label="Minimize" className="flex w-[39px] justify-center"><Minus className="h-2.5 w-2.5" /></button>
          <button type="button" aria-label="Restore" className="flex w-[39px] justify-center"><Copy className="h-2.5 w-2.5 -scale-x-100" strokeWidth={3} /></button>
          <button type="button" aria-label="Close" className="flex w-[39px] justify-center"><X className="h-3 w-3" /></button>
        </header>
        <nav className="flex h-4 shrink-0 items-center bg-white pl-[5px] font-['Open_Sans',sans-serif] text-[10px] text-[#1a1a1a]">
          <svg viewBox="0 0 12 10" className="h-2.5 w-3" aria-hidden="true"><rect width="12" height="10" fill="#b8c4c0" /><rect x="1" y="2" width="5" height="7" fill="#1c7a50" /><rect x="7" y="2" width="4" height="7" fill="#eee" /></svg>
          <ul className="ml-2 flex flex-1 gap-2.5 whitespace-nowrap">
            {menus.map((m) => <li key={m}><button type="button">{m}</button></li>)}
          </ul>
          <button type="button" aria-label="Minimize document" className="flex w-4 justify-center border-l border-[#eee]"><Minus className="h-2 w-2 text-[#4a6a7a]" strokeWidth={4} /></button>
          <button type="button" aria-label="Restore document" className="flex w-4 justify-center border-l border-[#eee]"><Copy className="h-2 w-2 -scale-x-100 text-[#4a6a7a]" strokeWidth={3} /></button>
          <button type="button" aria-label="Close document" className="flex w-4 justify-center border-l border-[#eee]"><X className="h-2 w-2 text-[#4a6a7a]" strokeWidth={5} /></button>
        </nav>
        <div className="shrink-0 font-['Liberation_Sans',sans-serif]">
          {toolbars.map((t) => <Toolbar key={t} items={t} />)}
        </div>
        <main className="flex min-h-0 flex-1 pb-[5px] pl-0.5">
          <ProjectManager />
          <div className="w-[7px] shrink-0" />
          <ModelTree />
          <div className="w-1 shrink-0" />
          <Viewport />
        </main>
        <BottomDock />
        <div className="flex h-[18px] shrink-0 items-end bg-[#f0f0f0] pl-px font-['Open_Sans',sans-serif] text-[9px] leading-[14px] text-[#1a1a1a]">
          <p className="flex-1">59 objects are selected</p>
          <span className="mr-0.5 h-3.5 w-6 border-l border-t border-[#a8a8a8]" />
          <span className="mr-0.5 flex h-3.5 w-7 items-center justify-center border-l border-t border-[#a8a8a8] text-[10px]">NUM</span>
          <span className="h-3.5 w-7 border-l border-t border-[#a8a8a8]" />
        </div>
      </div>
      <Taskbar />
    </div>
  );
}
